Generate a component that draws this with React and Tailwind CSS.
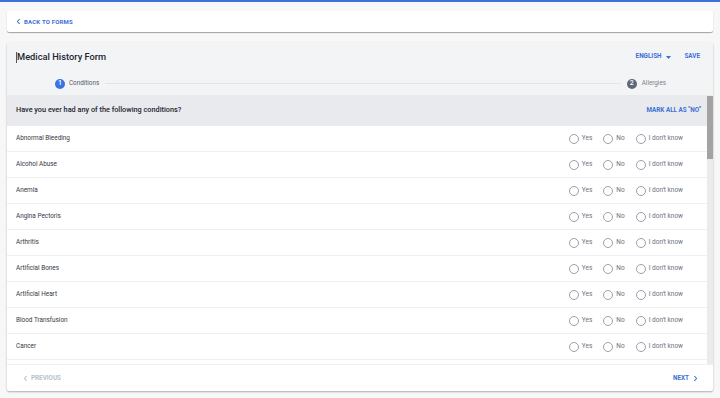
import { useState } from "react";

const conditions = [
  "Abnormal Bleeding",
  "Alcohol Abuse",
  "Anemia",
  "Angina Pectoris",
  "Arthritis",
  "Artificial Bones",
  "Artificial Heart",
  "Blood Transfusion",
  "Cancer",
];

const options = ["Yes", "No", "I don't know"];

function ChevronLeft({ className }) {
  return (
    <svg viewBox="0 0 24 24" className={className} fill="none" stroke="currentColor" strokeWidth="3.5" strokeLinecap="round" strokeLinejoin="round">
      <path d="M15 5l-7 7 7 7" />
    </svg>
  );
}

function ChevronRight({ className }) {
  return (
    <svg viewBox="0 0 24 24" className={className} fill="none" stroke="currentColor" strokeWidth="3.5" strokeLinecap="round" strokeLinejoin="round">
      <path d="M9 5l7 7-7 7" />
    </svg>
  );
}

function ConditionRow({ name, value, onChange }) {
  return (
    <div className="flex items-center justify-between h-[26px] pl-[9px] pr-[24px] pt-px border-b border-[#eeeff1] bg-white">
      <span className="text-[6.4px] text-[#353a45]">{name}</span>
      <div className="flex items-center gap-[11px]">
        {options.map((opt) => (
          <label key={opt} className="flex items-center gap-[3px] cursor-pointer" onClick={() => onChange(opt)}>
            <span className={`w-[10px] h-[10px] rounded-full border ${value === opt ? "border-[#3b6fd6] bg-[#3b6fd6]" : "border-[#9aa0aa] bg-white"}`} />
            <span className="text-[6.5px] text-[#6b7280]">{opt}</span>
          </label>
        ))}
      </div>
    </div>
  );
}

export default function App() {
  const [answers, setAnswers] = useState({});

  const markAllNo = () => {
    const next = {};
    conditions.forEach((c) => (next[c] = "No"));
    setAnswers(next);
  };

  return (
    <div className="w-[720px] h-[398px] bg-[#f7f7f8] overflow-hidden" style={{ fontFamily: "Roboto, 'Liberation Sans', sans-serif" }}>
      <div className="h-[2px] bg-[#3d72dd]" />

      <div className="px-[7px] pt-[9px]">
        {/* back link card */}
        <div className="h-[21px] bg-white rounded-[2px] shadow-[0_1px_1px_rgba(0,0,0,0.35)] flex items-center pl-[8px]">
          <button className="flex items-center gap-[2px] text-[#3b6fd6] text-[6px] font-bold tracking-[0.2px]">
            <ChevronLeft className="w-[7px] h-[7px]" />
            BACK TO FORMS
          </button>
        </div>

        {/* form card */}
        <div className="mt-[10px] bg-white rounded-[2px] shadow-[0_1px_2px_rgba(0,0,0,0.3)] overflow-hidden">
          <div className="bg-[#f3f4f6]">
            <div className="h-[30px] flex items-center justify-between pl-[9px] pr-[13px]">
              <div className="flex items-center">
                <span className="w-px h-[11px] bg-[#555]" />
                <span className="text-[9.3px] font-medium text-[#1f2430]">Medical History Form</span>
              </div>
              <div className="flex items-center gap-[13px] text-[6.3px] font-bold text-[#3b6fd6]">
                <button className="flex items-center gap-[5px]">
                  ENGLISH
                  <svg viewBox="0 0 10 6" className="w-[5px] h-[3px]" fill="currentColor">
                    <path d="M0 0h10L5 6z" />
                  </svg>
                </button>
                <button>SAVE</button>
              </div>
            </div>
            <div className="h-[23px] flex items-center pl-[48px] pr-[47px]">
              <span className="w-[10px] h-[10px] rounded-full bg-[#3b73e0] text-white text-[7px] font-medium flex items-center justify-center">1</span>
              <span className="ml-[4px] text-[6.3px] text-[#555b66]">Conditions</span>
              <div className="flex-1 h-px bg-[#e2e4e8] mx-[6px]" />
              <span className="w-[10px] h-[10px] rounded-full bg-[#5e6877] text-white text-[7px] font-medium flex items-center justify-center">2</span>
              <span className="ml-[5px] text-[6.3px] text-[#7b818b]">Allergies</span>
            </div>
          </div>

          <div className="flex h-[269px]">
            <div className="flex-1 overflow-hidden">
              <div className="h-[31px] bg-[#e9eaee] flex items-center justify-between pl-[9px] pr-[6px]">
                <span className="text-[7.3px] font-medium text-[#1f2430]">Have you ever had any of the following conditions?</span>
                <button onClick={markAllNo} className="text-[6.3px] font-bold text-[#3b6fd6]">MARK ALL AS "NO"</button>
              </div>
              {conditions.map((c) => (
                <ConditionRow key={c} name={c} value={answers[c]} onChange={(v) => setAnswers({ ...answers, [c]: v })} />
              ))}
            </div>
            <div className="w-[6px] bg-[#ebebeb] pt-px">
              <div className="h-[63px] bg-[#a3a3a3]" />
            </div>
          </div>

          <div className="h-[27px] border-t border-[#eeeff1] flex items-center justify-between pl-[15px] pr-[14px] pt-px">
            <button className="flex items-center gap-[2px] text-[6.3px] font-bold text-[#b7bfcc]">
              <ChevronLeft className="w-[7px] h-[7px]" />
              PREVIOUS
            </button>
            <button className="flex items-center gap-[3px] text-[6.3px] font-bold text-[#3b6fd6]">
              NEXT
              <ChevronRight className="w-[7px] h-[7px]" />
            </button>
          </div>
        </div>
      </div>
    </div>
  );
}
